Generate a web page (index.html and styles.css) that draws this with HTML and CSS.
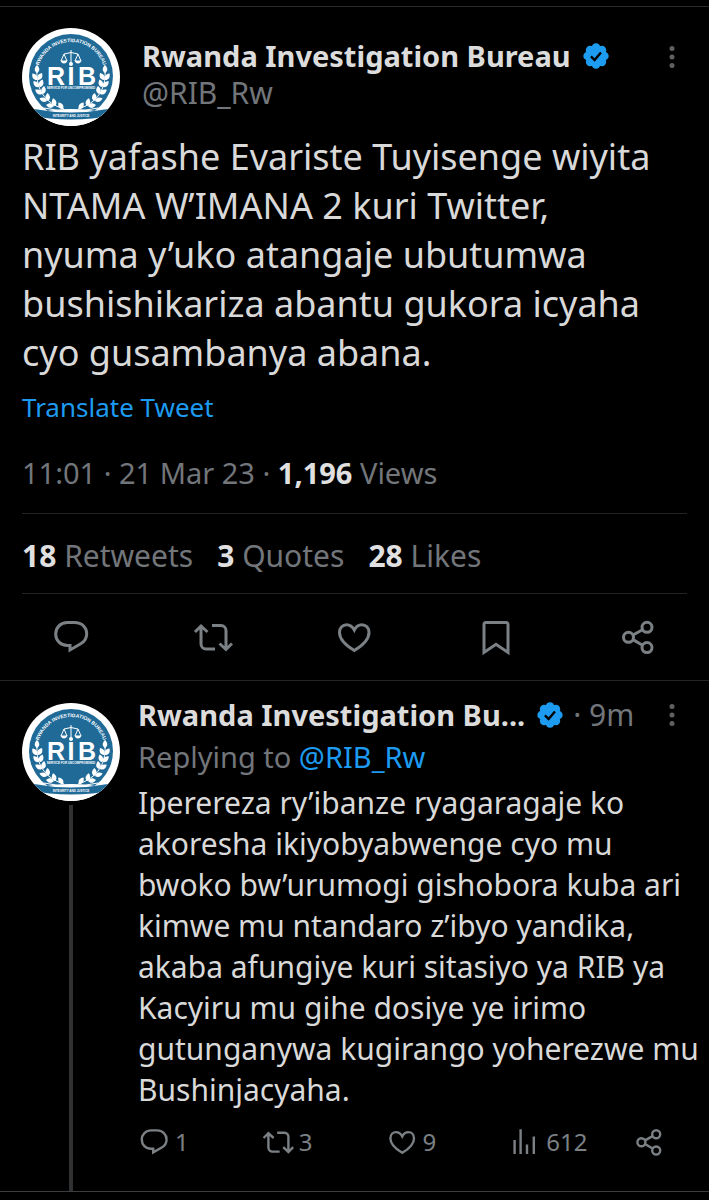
FILE: index.html
```html
<!DOCTYPE html>
<html lang="rw">
<head>
<meta charset="utf-8">
<meta name="viewport" content="width=device-width, initial-scale=1">
<title>Rwanda Investigation Bureau</title>
<link rel="stylesheet" href="styles.css">
</head>
<body>
<svg class="sprite" aria-hidden="true">
  <defs>
    <path id="arc-top" d="M15 48A34 34 0 0 1 83 48"/>
    <path id="leaf" d="M0 0C-3-2-3-5 0-8C3-5 3-2 0 0Z"/>
    <g id="branch" fill="#fff">
      <path d="M15 43C14 60 22 75 42 81" fill="none" stroke="#fff" stroke-width="1"/>
      <use href="#leaf" transform="translate(15 45)"/>
      <use href="#leaf" transform="translate(15 52) rotate(-35)"/>
      <use href="#leaf" transform="translate(16 52) rotate(30)"/>
      <use href="#leaf" transform="translate(17 59) rotate(-45)"/>
      <use href="#leaf" transform="translate(18 59) rotate(18)"/>
      <use href="#leaf" transform="translate(20 66) rotate(-58)"/>
      <use href="#leaf" transform="translate(21 66) rotate(8)"/>
      <use href="#leaf" transform="translate(25 73) rotate(-70)"/>
      <use href="#leaf" transform="translate(26 73) rotate(-4)"/>
      <use href="#leaf" transform="translate(32 78) rotate(-82)"/>
      <use href="#leaf" transform="translate(33 78) rotate(-14)"/>
      <use href="#leaf" transform="translate(41 81) rotate(-35)"/>
    </g>
    <clipPath id="disc"><circle cx="49" cy="49" r="49"/></clipPath>
  </defs>
  <symbol id="seal" viewBox="0 0 98 98">
    <circle cx="49" cy="49" r="49" fill="#fff"/>
    <circle cx="49" cy="48" r="42" fill="#206a98"/>
    <text class="seal-ring"><textPath href="#arc-top" startOffset="50%">RWANDA INVESTIGATION BUREAU</textPath></text>
    <use href="#branch"/>
    <use href="#branch" transform="translate(98 0) scale(-1 1)"/>
    <path d="M49 22v15M42 26q7-3 14 0M42 26l-3 7M42 26l3 7M56 26l-3 7M56 26l3 7" fill="none" stroke="#fff" stroke-width="1"/>
    <path d="M38.500 32.500h7q-1 3-3.500 3t-3.500-3zM52.500 32.500h7q-1 3-3.500 3t-3.500-3z" fill="#fff"/>
    <circle cx="49" cy="36" r="2" fill="#fff"/>
    <text class="seal-name" x="34 49 65" y="57">RIB</text>
    <text class="seal-motto" x="49" y="61">SERVICE FOR UNCOMPROMISED</text>
    <g clip-path="url(#disc)">
      <path d="M10 86Q49 76 88 86L84 98H14Z" fill="#fff"/>
      <path d="M12 81Q49 88 86 81L92 87Q49 96 6 87Z" fill="#206a98"/>
      <path d="M22 80Q49 86 76 80" fill="none" stroke="#fff" stroke-width="1"/>
      <text class="seal-motto" x="49" y="89">INTEGRITY AND JUSTICE</text>
    </g>
  </symbol>
  <symbol id="verified" viewBox="0 0 24 24">
    <g fill="#1d9bf0"><circle cx="12" cy="12" r="9.500"/><circle cx="12" cy="4.300" r="4"/><circle cx="17.400" cy="6.600" r="4"/><circle cx="19.700" cy="12" r="4"/><circle cx="17.400" cy="17.400" r="4"/><circle cx="12" cy="19.700" r="4"/><circle cx="6.600" cy="17.400" r="4"/><circle cx="4.300" cy="12" r="4"/><circle cx="6.600" cy="6.600" r="4"/></g>
    <path d="M7.300 12.300L10.700 15.600L16.600 8.700" fill="none" stroke="#000" stroke-width="2.200"/>
  </symbol>
  <symbol id="dots" viewBox="0 0 8 24">
    <circle cx="4" cy="3.500" r="2.500"/><circle cx="4" cy="12" r="2.500"/><circle cx="4" cy="20.500" r="2.500"/>
  </symbol>
  <symbol id="reply" viewBox="0 0 40 40">
    <path d="M16.500 5.500h7C31 5.500 35.700 10.500 35.700 16.800c0 4.400-2.300 8-6 10L19 33v-4.500h-2.500C9.500 28.500 4.700 23.500 4.700 17S9.500 5.500 16.500 5.500z"/>
  </symbol>
  <symbol id="retweet" viewBox="0 0 40 40">
    <path d="M2 15L8 9L14.500 15M8 9V27a5 5 0 0 0 5 5H22M19 8.500h9a5 5 0 0 1 5 5V32M26.500 26.500L33 32.500L39 26.500"/>
  </symbol>
  <symbol id="like" viewBox="0 0 40 40">
    <path d="M20.300 33.500C12 28.500 5.500 22 5.500 15.500C5.500 10.800 8.800 7.700 12.600 7.700C16 7.700 18.500 9.600 20.300 13C22 9.600 24.600 7.700 28 7.700C31.800 7.700 35 10.800 35 15.500C35 22 28.600 28.500 20.300 33.500z"/>
  </symbol>
  <symbol id="bookmark" viewBox="0 0 40 40">
    <path d="M8 35.500V7.500a2 2 0 0 1 2-2H30a2 2 0 0 1 2 2V35.500L20 27.300z"/>
  </symbol>
  <symbol id="share" viewBox="0 0 40 40">
    <circle cx="10.500" cy="20.300" r="5"/><circle cx="29" cy="10.300" r="5"/><circle cx="29" cy="30.600" r="5"/>
    <path d="M15 18L24.500 12.700M15 22.600L24.500 28.200"/>
  </symbol>
  <symbol id="views" viewBox="0 0 40 40">
    <path d="M7 17.500V35M14.500 4V35M22.500 23V35M31 13V35"/>
  </symbol>
</svg>

<main class="thread">
  <article class="tweet">
    <header class="author">
      <svg class="avatar" role="img" aria-label="RIB"><use href="#seal"/></svg>
      <div class="identity">
        <h1 class="name">Rwanda Investigation Bureau <svg class="badge" aria-hidden="true"><use href="#verified"/></svg></h1>
        <a class="handle" href="#rib">@RIB_Rw</a>
      </div>
      <button class="more" type="button" aria-label="More"><svg class="more-icon"><use href="#dots"/></svg></button>
    </header>
    <p class="tweet-text">RIB yafashe Evariste Tuyisenge wiyita NTAMA W’IMANA 2 kuri Twitter, nyuma y’uko atangaje ubutumwa bushishikariza abantu gukora icyaha cyo gusambanya abana.</p>
    <a class="translate" href="#translate">Translate Tweet</a>
    <p class="meta">11:01 · 21 Mar 23 · <strong>1,196</strong> Views</p>
    <div class="stats">
      <a href="#retweets"><strong>18</strong> Retweets</a>
      <a href="#quotes"><strong>3</strong> Quotes</a>
      <a href="#likes"><strong>28</strong> Likes</a>
    </div>
    <div class="actions">
      <button type="button" aria-label="Reply"><svg class="icon"><use href="#reply"/></svg></button>
      <button type="button" aria-label="Retweet"><svg class="icon"><use href="#retweet"/></svg></button>
      <button type="button" aria-label="Like"><svg class="icon"><use href="#like"/></svg></button>
      <button type="button" aria-label="Bookmark"><svg class="icon"><use href="#bookmark"/></svg></button>
      <button type="button" aria-label="Share"><svg class="icon"><use href="#share"/></svg></button>
    </div>
  </article>

  <article class="answer">
    <div class="rail">
      <svg class="avatar" role="img" aria-label="RIB"><use href="#seal"/></svg>
      <div class="rail-line"></div>
    </div>
    <div class="answer-body">
      <header class="answer-head">
        <h2 class="name">Rwanda Investigation Bu...</h2>
        <svg class="badge" aria-hidden="true"><use href="#verified"/></svg>
        <span class="age">· 9m</span>
        <button class="more" type="button" aria-label="More"><svg class="more-icon"><use href="#dots"/></svg></button>
      </header>
      <p class="replying">Replying to <a href="#rib">@RIB_Rw</a></p>
      <p class="answer-text">Iperereza ry’ibanze ryagaragaje ko akoresha ikiyobyabwenge cyo mu bwoko bw’urumogi gishobora kuba ari kimwe mu ntandaro z’ibyo yandika, akaba afungiye kuri sitasiyo ya RIB ya Kacyiru mu gihe dosiye ye irimo gutunganywa kugirango yoherezwe mu Bushinjacyaha.</p>
      <div class="answer-actions">
        <button type="button" aria-label="Reply, 1"><svg class="icon"><use href="#reply"/></svg>1</button>
        <button type="button" aria-label="Retweet, 3"><svg class="icon"><use href="#retweet"/></svg>3</button>
        <button type="button" aria-label="Like, 9"><svg class="icon"><use href="#like"/></svg>9</button>
        <button type="button" aria-label="Views, 612"><svg class="icon"><use href="#views"/></svg>612</button>
        <button type="button" aria-label="Share"><svg class="icon"><use href="#share"/></svg></button>
      </div>
    </div>
  </article>
</main>
</body>
</html>
```

FILE: styles.css
```css
* { box-sizing: border-box; }

body {
  margin: 0;
  background: #000;
  color: #d9d9d9;
  font-family: "Noto Sans", "Open Sans", sans-serif;
}

h1, h2, p { margin: 0; }
a { color: #1d9bf0; text-decoration: none; }
strong { color: #e0e0e0; font-weight: 700; }

button {
  display: flex;
  align-items: center;
  padding: 0;
  border: 0;
  background: none;
  color: #7b8085;
  font: inherit;
}

.sprite { position: absolute; width: 0; height: 0; }

.seal-ring, .seal-name, .seal-motto {
  fill: #fff;
  font-family: "Liberation Sans", Arial, sans-serif;
  font-weight: 700;
  text-anchor: middle;
}
.seal-ring { font-size: 5px; }
.seal-name { font-size: 25px; }
.seal-motto { font-size: 3px; }

.thread { padding-top: 6px; }

.tweet {
  padding: 21px 22px 0;
  border-top: 1px solid #2a2c2e;
}

.author { display: flex; gap: 22px; }
.avatar { flex: none; display: block; width: 98px; height: 98px; }
.identity { flex: 1; padding-top: 8px; }

.name {
  color: #dcdcdc;
  font-size: 29px;
  font-weight: 700;
  line-height: 40px;
  white-space: nowrap;
}
.identity .name { display: flex; align-items: center; gap: 12px; }
.badge { flex: none; width: 26px; height: 26px; }

.handle {
  display: block;
  color: #72767a;
  font-size: 30px;
  line-height: 34px;
}

.more { flex: none; width: 30px; height: 24px; justify-content: center; }
.author .more { margin-top: 17px; }
.more-icon { width: 8px; height: 24px; fill: #5e6164; }

.tweet-text {
  padding: 6px 20px 0 0;
  font-size: 36px;
  line-height: 49px;
}

.translate {
  display: block;
  padding-top: 12px;
  font-size: 26px;
  line-height: 36px;
}

.meta {
  padding: 28px 0 20px;
  border-bottom: 1px solid #222426;
  color: #72767a;
  font-size: 29px;
  line-height: 40px;
}

.stats {
  display: flex;
  gap: 24px;
  padding: 22px 0 17px;
  border-bottom: 1px solid #222426;
  font-size: 30px;
  line-height: 40px;
}
.stats a { color: #72767a; }

.icon {
  flex: none;
  display: block;
  width: 40px;
  height: 40px;
  fill: none;
  stroke: #7b8085;
  stroke-width: 3px;
}

.actions {
  display: flex;
  justify-content: space-around;
  margin: 0 -22px;
  padding: 23px 0;
}

.answer {
  display: flex;
  gap: 18px;
  padding: 22px 22px 0;
  border-top: 1px solid #222426;
  border-bottom: 1px solid #3a3c3e;
}

.rail { display: flex; flex-direction: column; align-items: center; gap: 4px; }
.rail-line { flex: 1; width: 4px; background: #2f3133; }

.answer-body { flex: 1; min-width: 0; }
.answer-head { display: flex; align-items: center; margin-top: -8px; }
.answer-head .badge { margin: 0 10px 0 12px; }
.age { flex: 1; color: #72767a; font-size: 30px; line-height: 40px; }

.replying { color: #72767a; font-size: 29px; line-height: 44px; }

.answer-text {
  margin-right: -16px;
  padding-top: 3px;
  font-size: 30px;
  line-height: 41px;
}

.answer-actions { display: flex; padding: 16px 0 33px; }
.answer-actions button {
  flex: 1;
  gap: 5px;
  font-size: 24px;
  line-height: 32px;
}
.answer-actions button:last-child { flex: none; width: 54px; }
.answer-actions .icon { width: 32px; height: 32px; }
```
